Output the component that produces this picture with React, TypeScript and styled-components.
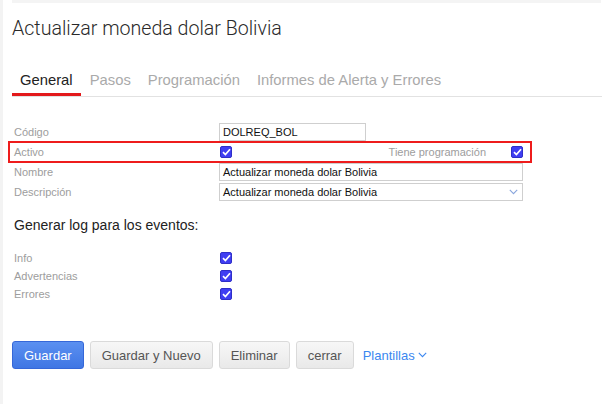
import React from 'react'
import styled, { createGlobalStyle } from 'styled-components'

const GlobalStyle = createGlobalStyle`
  html, body {
    margin: 0;
    padding: 0;
    background: #ffffff;
  }
  body {
    font-family: "Liberation Sans", Arial, sans-serif;
  }
`

const Page = styled.div`
  min-height: 404px;
  border-left: 3px solid #f3f3f3;
  padding-left: 9px;
  box-sizing: border-box;
`

const TopBand = styled.div`
  height: 3px;
  background: #f4f4f4;
  margin-right: 1px;
`

const Title = styled.h1`
  margin: 14px 0 0 0;
  font-family: Roboto, "Liberation Sans", sans-serif;
  font-weight: 300;
  font-size: 19.6px;
  line-height: 24px;
  color: #2a2a2a;
`

const TabBar = styled.div`
  display: flex;
  margin-top: 31px;
  border-bottom: 1px solid #e2e2e2;
`

const Tab = styled.div<{ $active?: boolean }>`
  padding: 0 8px 4px 8px;
  margin-right: 1px;
  font-size: 14.8px;
  line-height: 17px;
  color: ${({ $active }) => ($active ? '#222222' : '#aaaaaa')};
  border-bottom: 3px solid ${({ $active }) => ($active ? '#e3191b' : 'transparent')};
`

const Form = styled.div`
  display: flex;
  flex-direction: column;
  gap: 2px;
  margin: 26px 0 0 -2px;
  width: 520px;
`

const Row = styled.div<{ $highlight?: boolean }>`
  display: flex;
  align-items: center;
  height: 18px;
  padding: 0 7px 0 4px;
  outline: ${({ $highlight }) => ($highlight ? '2px solid #ee1c1c' : 'none')};
`

const Label = styled.div<{ $width?: number }>`
  width: ${({ $width }) => $width ?? 205}px;
  flex-shrink: 0;
  font-size: 11px;
  color: #9d9d9d;
`

const SideLabel = styled.div`
  margin-left: auto;
  margin-right: 24px;
  font-size: 11px;
  color: #9d9d9d;
`

const TextBox = styled.div<{ $width: number }>`
  box-sizing: border-box;
  width: ${({ $width }) => $width}px;
  height: 18px;
  border: 1px solid #cfcfcf;
  padding: 0 3px;
  font-size: 11px;
  line-height: 16px;
  color: #111111;
  display: flex;
  align-items: center;
`

const SelectBox = styled(TextBox)`
  justify-content: space-between;
  padding-right: 4px;
`

const Check = styled.span`
  display: inline-flex;
  align-items: center;
  justify-content: center;
  box-sizing: border-box;
  width: 12px;
  height: 12px;
  margin-left: 1px;
  border-radius: 2px;
  background: #3f3ef2;
  border: 1px solid #2f2fc8;
`

const SectionTitle = styled.h2`
  margin: 16px 0 0 2px;
  font-size: 14px;
  font-weight: 400;
  line-height: 16px;
  color: #222222;
`

const LogList = styled.div`
  display: flex;
  flex-direction: column;
  margin: 16px 0 0 -2px;
  width: 520px;
`

const LogRow = styled(Row)`
  height: 18px;
`

const Actions = styled.div`
  display: flex;
  align-items: center;
  gap: 6px;
  margin-top: 38px;
`

const Button = styled.button<{ $primary?: boolean }>`
  height: 28px;
  padding: 0 11px;
  border-radius: 3px;
  font-family: "Liberation Sans", Arial, sans-serif;
  font-size: 13px;
  cursor: pointer;
  color: ${({ $primary }) => ($primary ? '#ffffff' : '#555555')};
  border: 1px solid ${({ $primary }) => ($primary ? '#3567d8' : '#dadada')};
  background: ${({ $primary }) =>
    $primary
      ? 'linear-gradient(#5b90f1, #3f76e4)'
      : 'linear-gradient(#f7f7f7, #e9e9e9)'};
`

const TemplatesLink = styled.a`
  display: inline-flex;
  align-items: center;
  gap: 3px;
  margin-left: 3px;
  font-size: 13px;
  color: #3b87f0;
  text-decoration: none;
`

const CheckMark = () => (
  <svg width="9" height="8" viewBox="0 0 9 8">
    <path d="M1 4.2 L3.4 6.5 L8 1.2" fill="none" stroke="#ffffff" strokeWidth="1.7" />
  </svg>
)

const Checkbox = () => (
  <Check>
    <CheckMark />
  </Check>
)

const Chevron = ({ color }: { color: string }) => (
  <svg width="9" height="6" viewBox="0 0 9 6">
    <path d="M0.8 0.8 L4.5 4.6 L8.2 0.8" fill="none" stroke={color} strokeWidth="1.1" />
  </svg>
)

const tabs = ['General', 'Pasos', 'Programación', 'Informes de Alerta y Errores']
const logEvents = ['Info', 'Advertencias', 'Errores']

export default function App() {
  return (
    <>
      <GlobalStyle />
      <Page>
        <TopBand />
        <Title>Actualizar moneda dolar Bolivia</Title>
        <TabBar>
          {tabs.map((t, i) => (
            <Tab key={t} $active={i === 0}>
              {t}
            </Tab>
          ))}
        </TabBar>
        <Form>
          <Row>
            <Label>Código</Label>
            <TextBox $width={147}>DOLREQ_BOL</TextBox>
          </Row>
          <Row $highlight>
            <Label>Activo</Label>
            <Checkbox />
            <SideLabel>Tiene programación</SideLabel>
            <Checkbox />
          </Row>
          <Row>
            <Label>Nombre</Label>
            <TextBox $width={304}>Actualizar moneda dolar Bolivia</TextBox>
          </Row>
          <Row>
            <Label>Descripción</Label>
            <SelectBox $width={304}>
              Actualizar moneda dolar Bolivia
              <Chevron color="#8aa6dd" />
            </SelectBox>
          </Row>
        </Form>
        <SectionTitle>Generar log para los eventos:</SectionTitle>
        <LogList>
          {logEvents.map((e) => (
            <LogRow key={e}>
              <Label>{e}</Label>
              <Checkbox />
            </LogRow>
          ))}
        </LogList>
        <Actions>
          <Button $primary>Guardar</Button>
          <Button>Guardar y Nuevo</Button>
          <Button>Eliminar</Button>
          <Button>cerrar</Button>
          <TemplatesLink href="#">
            Plantillas
            <Chevron color="#3b87f0" />
          </TemplatesLink>
        </Actions>
      </Page>
    </>
  )
}
